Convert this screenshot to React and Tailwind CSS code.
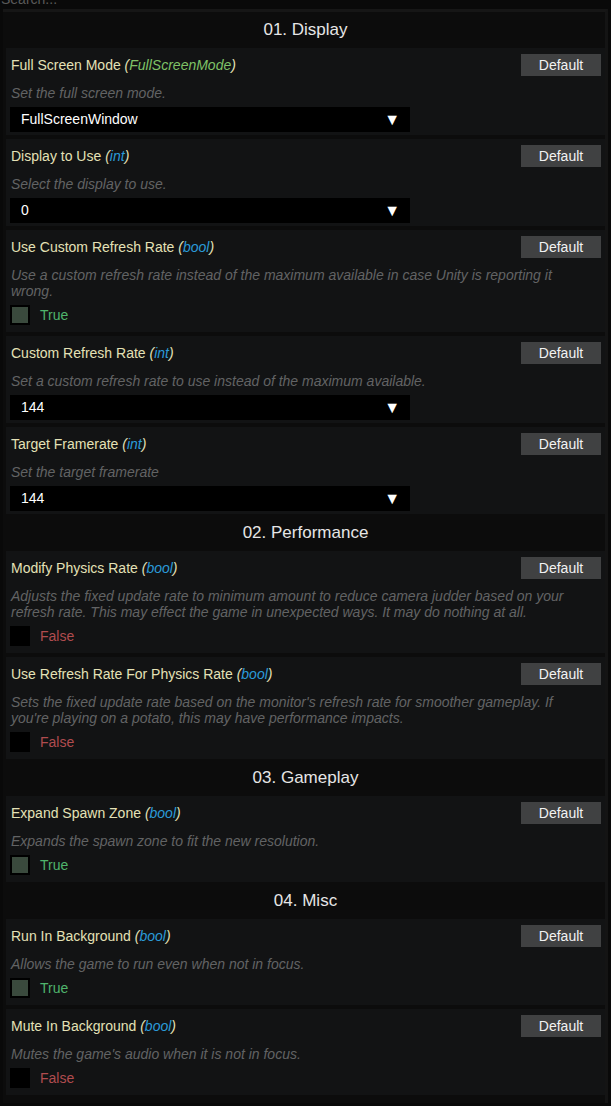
import React from 'react';

const sections = [
    {
        title: '01. Display',
        items: [
            { name: 'Full Screen Mode', type: 'FullScreenMode', enumType: true, desc: 'Set the full screen mode.', value: 'FullScreenWindow', kind: 'select' },
            { name: 'Display to Use', type: 'int', desc: 'Select the display to use.', value: '0', kind: 'select' },
            { name: 'Use Custom Refresh Rate', type: 'bool', desc: 'Use a custom refresh rate instead of the maximum available in case Unity is reporting it wrong.', value: true, kind: 'bool' },
            { name: 'Custom Refresh Rate', type: 'int', desc: 'Set a custom refresh rate to use instead of the maximum available.', value: '144', kind: 'select' },
            { name: 'Target Framerate', type: 'int', desc: 'Set the target framerate', value: '144', kind: 'select' },
        ],
    },
    {
        title: '02. Performance',
        items: [
            { name: 'Modify Physics Rate', type: 'bool', desc: 'Adjusts the fixed update rate to minimum amount to reduce camera judder based on your refresh rate. This may effect the game in unexpected ways. It may do nothing at all.', value: false, kind: 'bool' },
            { name: 'Use Refresh Rate For Physics Rate', type: 'bool', desc: "Sets the fixed update rate based on the monitor's refresh rate for smoother gameplay. If you're playing on a potato, this may have performance impacts.", value: false, kind: 'bool' },
        ],
    },
    {
        title: '03. Gameplay',
        items: [
            { name: 'Expand Spawn Zone', type: 'bool', desc: 'Expands the spawn zone to fit the new resolution.', value: true, kind: 'bool' },
        ],
    },
    {
        title: '04. Misc',
        items: [
            { name: 'Run In Background', type: 'bool', desc: 'Allows the game to run even when not in focus.', value: true, kind: 'bool' },
            { name: 'Mute In Background', type: 'bool', desc: "Mutes the game's audio when it is not in focus.", value: false, kind: 'bool' },
        ],
    },
];

function Setting({ item }) {
    return (
        <div className={`bg-[#121314] px-[4px] pt-[6px] ${item.kind === 'bool' ? 'pb-[7px]' : 'pb-[3px]'}`}>
            <div className="flex items-center justify-between h-[22px]">
                <div className="pl-[1px] text-[14px] leading-[22px] text-[#e4e1b6]">
                    {item.name}{' '}
                    <span className="italic">
                        (<span className={item.enumType ? 'text-[#7fc267]' : 'text-[#2b9ad8]'}>{item.type}</span>)
                    </span>
                </div>
                <button className="w-[80px] h-[22px] bg-[#404142] text-[#f2f2f2] text-[14px] leading-[22px]">
                    Default
                </button>
            </div>
            <p className="mt-[9px] pl-[1px] pr-[30px] text-[14px] leading-[16px] italic text-[#626364]">
                {item.desc}
            </p>
            {item.kind === 'select' ? (
                <div className="mt-[6px] w-[400px] h-[25px] bg-black flex items-center justify-between pl-[11px] pr-[10px]">
                    <span className="text-[14px] text-white">{item.value}</span>
                    <span className="text-[16px] text-white leading-none">▼</span>
                </div>
            ) : (
                <div className="mt-[6px] flex items-center h-[20px]">
                    <div className={`w-[20px] h-[20px] border-[2px] border-black ${item.value ? 'bg-[#3a4a3d]' : 'bg-black'}`} />
                    <span className={`ml-[10px] text-[14px] ${item.value ? 'text-[#4fb46c]' : 'text-[#b04c4f]'}`}>
                        {item.value ? 'True' : 'False'}
                    </span>
                </div>
            )}
        </div>
    );
}

export default function App() {
    return (
        <div className="w-[611px] h-[1106px] overflow-hidden bg-[#090909]" style={{ fontFamily: '"Liberation Sans", Arial, sans-serif' }}>
            <div className="h-[9px] overflow-hidden">
                <div className="-mt-[8px] pl-[1px] text-[14px] leading-[14px] text-[#5a5a5a]">Search...</div>
            </div>
            <div className="ml-[3px] w-[605px] bg-[#0c0c0c] border-t-[3px] border-t-[#161616] border-r-[3px] border-r-[#141414] pl-[3px] pb-[8px] flex flex-col gap-[1px]">
                {sections.map((section) => (
                    <div key={section.title} className="flex flex-col">
                        <div className="h-[36px] flex items-center justify-center text-[17px] text-[#e6e6e6]">
                            {section.title}
                        </div>
                        <div className="flex flex-col gap-[4px]">
                            {section.items.map((item) => (
                                <Setting key={item.name} item={item} />
                            ))}
                        </div>
                    </div>
                ))}
            </div>
        </div>
    );
}
